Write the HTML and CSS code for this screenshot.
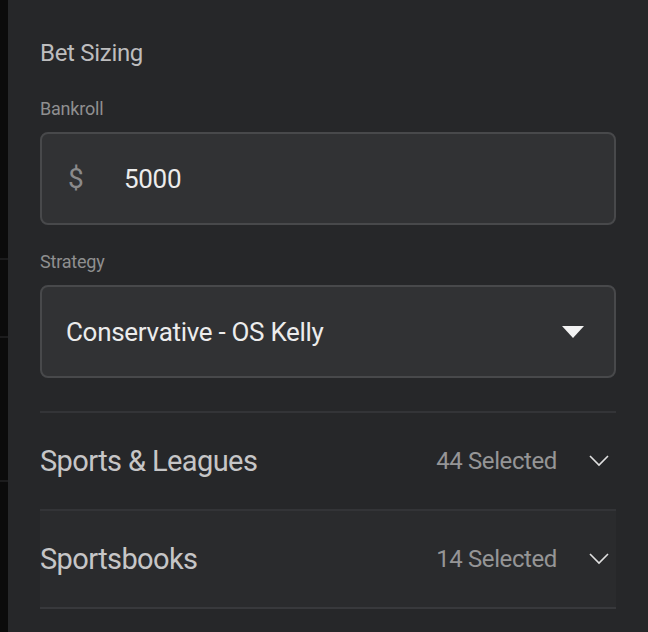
FILE: index.html
```html
<!DOCTYPE html>
<html lang="en">
<head>
  <meta charset="UTF-8" />
  <meta name="viewport" content="width=device-width, initial-scale=1.0" />
  <title>Bet Sizing</title>
  <link rel="stylesheet" href="styles.css">
</head>
<body>
  <div class="pagina">
    <div class="franja">
      <div class="franja-bloque b1"></div>
      <div class="franja-bloque b2"></div>
      <div class="franja-bloque b3"></div>
      <div class="franja-bloque b4"></div>
    </div>

    <div class="panel">
      <h2 class="titulo">Bet Sizing</h2>

      <label class="etiqueta">Bankroll</label>
      <div class="campo">
        <span class="moneda">$</span>
        <span class="valor">5000</span>
      </div>

      <label class="etiqueta">Strategy</label>
      <div class="campo selector">
        <span class="valor">Conservative - OS Kelly</span>
        <svg class="triangulo" width="22" height="12" viewBox="0 0 22 12">
          <path d="M0 0 H22 L11 12 Z" fill="#f2f2f2"/>
        </svg>
      </div>

      <div class="filtros">
        <div class="fila">
          <span class="fila-nombre">Sports &amp; Leagues</span>
          <span class="fila-cuenta">44 Selected</span>
          <svg class="chevron" width="20" height="12" viewBox="0 0 20 12">
            <path d="M1 1 L10 10 L19 1" fill="none" stroke="#e0e0e0" stroke-width="1.6"/>
          </svg>
        </div>
        <div class="fila activa">
          <span class="fila-nombre">Sportsbooks</span>
          <span class="fila-cuenta">14 Selected</span>
          <svg class="chevron" width="20" height="12" viewBox="0 0 20 12">
            <path d="M1 1 L10 10 L19 1" fill="none" stroke="#e0e0e0" stroke-width="1.6"/>
          </svg>
        </div>
      </div>
    </div>
  </div>
</body>
</html>
```

FILE: styles.css
```css
body {
  margin: 0;
  background: #262729;
  font-family: Roboto, 'Liberation Sans', sans-serif;
  height: 632px;
  overflow: hidden;
}

.pagina {
  display: flex;
  height: 632px;
}

.franja {
  width: 8px;
  display: flex;
  flex-direction: column;
  background: #0b0b0b;
}

.franja-bloque {
  border-bottom: 2px solid #1c1c1d;
}

.b1 { height: 258px; }
.b2 { height: 76px; }
.b3 { height: 142px; }
.b4 { flex: 1; border-bottom: none; }

.panel {
  flex: 1;
  padding: 0 32px;
  display: flex;
  flex-direction: column;
}

.titulo {
  margin: 36px 0 0;
  font-size: 24px;
  font-weight: 400;
  line-height: 34px;
  color: #bdbdbe;
  letter-spacing: -0.3px;
}

.etiqueta {
  display: block;
  margin-top: 27px;
  font-size: 18px;
  line-height: 24px;
  color: #8f8f90;
  letter-spacing: -0.2px;
}

.campo {
  margin-top: 11px;
  height: 89px;
  border: 2px solid #48494b;
  border-radius: 8px;
  background: #313234;
  display: flex;
  align-items: center;
  padding: 0 26px;
}

.moneda {
  font-size: 28px;
  color: #8a8a8b;
  width: 56px;
}

.valor {
  font-size: 26px;
  color: #ececec;
  letter-spacing: -0.3px;
}

.selector {
  justify-content: space-between;
  padding: 0 30px 0 24px;
}

.campo + .etiqueta {
  margin-top: 25px;
}

.filtros {
  margin-top: 33px;
  border-top: 2px solid #333437;
}

.fila {
  height: 96px;
  display: flex;
  align-items: center;
  border-bottom: 2px solid #333437;
}

.fila.activa {
  background: #2a2b2d;
  border-bottom-color: #38393c;
}

.fila-nombre {
  flex: 1;
  font-size: 29px;
  color: #c6c6c7;
  letter-spacing: -0.6px;
}

.fila-cuenta {
  font-size: 24px;
  color: #959596;
  letter-spacing: -0.4px;
  margin-right: 32px;
}

.chevron {
  margin-right: 7px;
}
```
